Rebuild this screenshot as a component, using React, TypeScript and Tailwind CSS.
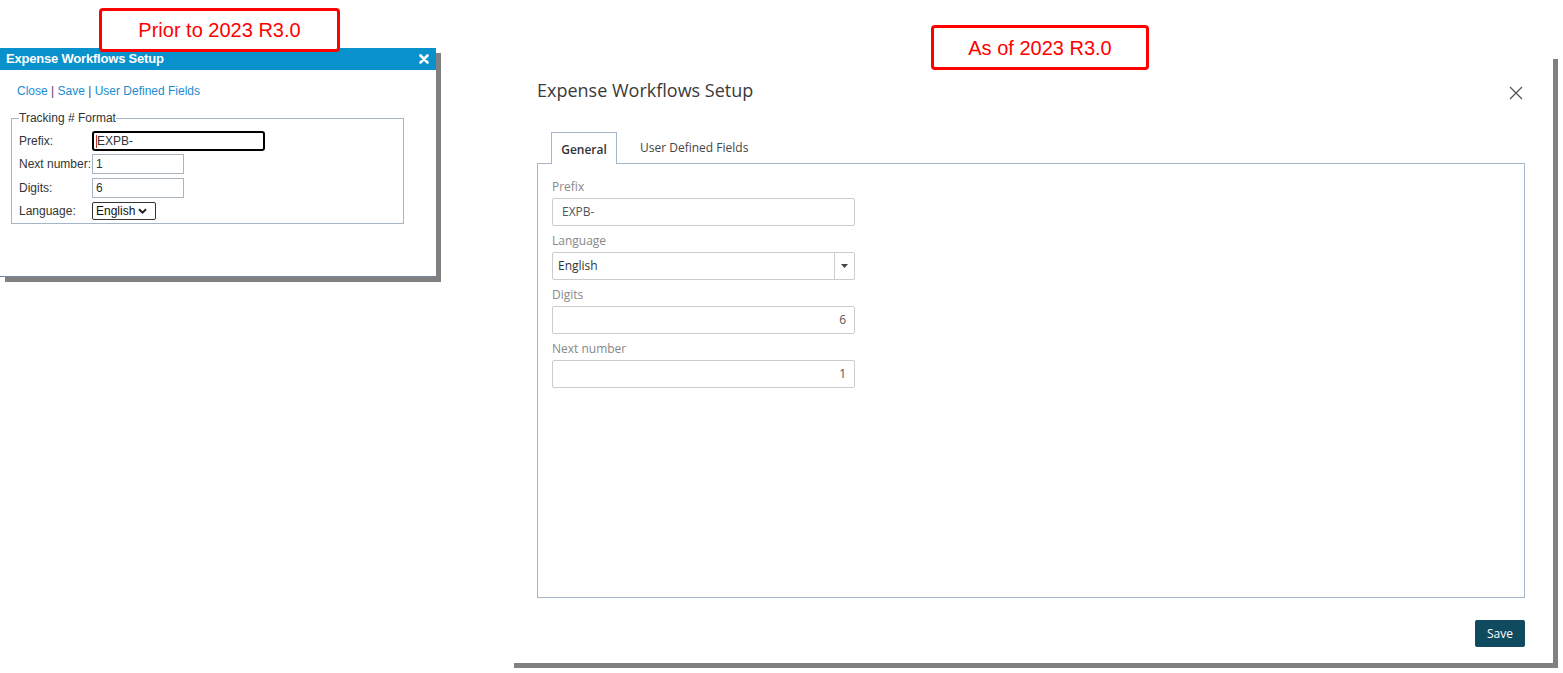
import React from "react";

function Caret() {
  return (
    <svg width="9" height="6" viewBox="0 0 9 6" className="ml-[3px]">
      <path d="M1 1.2 L4.5 4.6 L8 1.2" fill="none" stroke="#222" strokeWidth="2" />
    </svg>
  );
}

function OldDialog() {
  return (
    <div className="mt-[48px] w-[436px] h-[229px] bg-white border-b border-[#7387a8] shadow-[5px_5px_0_#808080] flex flex-col shrink-0 font-['Liberation_Sans',Arial,sans-serif] text-[12px] text-[#333]">
      <div className="h-[22px] bg-[#0991cc] flex items-center justify-between pl-[6px] pr-[7px]">
        <span className="text-white font-bold text-[13px] tracking-[-0.2px]">Expense Workflows Setup</span>
        <svg width="10" height="10" viewBox="0 0 10 10">
          <path d="M1.5 1.5 L8.5 8.5 M8.5 1.5 L1.5 8.5" stroke="#ffffff" strokeWidth="2.6" strokeLinecap="round" />
        </svg>
      </div>
      <div className="pl-[17px] pt-[14px] leading-[14px] text-[12px]">
        <span className="text-[#1a8ccf]">Close</span>
        <span className="text-[#5a3b7a]"> | </span>
        <span className="text-[#1a8ccf]">Save</span>
        <span className="text-[#5a3b7a]"> | </span>
        <span className="text-[#1a8ccf]">User Defined Fields</span>
      </div>
      <fieldset className="ml-[11px] mt-[13px] w-[393px] h-[113px] border border-[#a3b6c9] px-[7px] pt-[6px]">
        <legend className="ml-0 px-0 leading-[14px] text-[12px] text-[#333]">Tracking # Format</legend>
        <div className="flex flex-col">
          <div className="flex items-center h-[20px]">
            <span className="w-[73px]">Prefix:</span>
            <div className="w-[173px] h-[20px] border-2 border-black rounded-[3px] flex items-center pl-[2px] text-[#333]">
              <span className="w-px h-[13px] bg-[#c0392b]" />
              EXPB-
            </div>
          </div>
          <div className="flex items-center h-[20px] mt-[3px]">
            <span className="w-[73px] whitespace-nowrap">Next number:</span>
            <div className="w-[92px] h-[20px] border border-[#aab4be] flex items-center pl-[3px]">1</div>
          </div>
          <div className="flex items-center h-[20px] mt-[4px]">
            <span className="w-[73px]">Digits:</span>
            <div className="w-[92px] h-[20px] border border-[#aab4be] flex items-center pl-[3px]">6</div>
          </div>
          <div className="flex items-center h-[18px] mt-[4px]">
            <span className="w-[73px]">Language:</span>
            <div className="w-[64px] h-[18px] border border-[#333] rounded-[2px] flex items-center pl-[3px] text-[#111]">
              English
              <Caret />
            </div>
          </div>
        </div>
      </fieldset>
    </div>
  );
}

function Field({ label, children }: { label: string; children: React.ReactNode }) {
  return (
    <div className="flex flex-col mb-[7px]">
      <span className="text-[12px] leading-[16px] text-[#888]">{label}</span>
      <div className="mt-[3px]">{children}</div>
    </div>
  );
}

function NewDialog() {
  return (
    <div className="ml-[73px] mt-[54px] w-[1044px] h-[609px] bg-white shadow-[5px_5px_0_#808080] flex flex-col pt-[24px] px-[28px] shrink-0 font-['Open_Sans','Noto_Sans',sans-serif]">
      <div className="flex items-center justify-between h-[24px]">
        <span className="text-[18px] leading-[24px] text-[#3a3a3a] font-normal">Expense Workflows Setup</span>
        <svg width="14" height="14" viewBox="0 0 14 14" className="mr-[2px] mt-[6px]">
          <path d="M1 1 L13 13 M13 1 L1 13" stroke="#555" strokeWidth="1.3" />
        </svg>
      </div>
      <div className="flex items-end mt-[30px] pl-[14px] h-[31px]">
        <div className="h-[32px] w-[66px] border border-b-0 border-[#a4b6ca] bg-white flex items-center justify-center text-[12px] font-semibold text-[#333] mb-[-1px] relative z-10 pt-[2px]">
          General
        </div>
        <div className="h-[31px] pl-[23px] flex items-center text-[12px] text-[#444]">User Defined Fields</div>
      </div>
      <div className="h-[435px] border border-[#a4b6ca] pt-[15px] pl-[14px]">
        <div className="w-[303px] flex flex-col">
          <Field label="Prefix">
            <div className="h-[28px] border border-[#ccc] rounded-[2px] flex items-center pl-[9px] text-[12px] text-[#555]">EXPB-</div>
          </Field>
          <Field label="Language">
            <div className="h-[28px] border border-[#ccc] rounded-[2px] flex items-center text-[12px] text-[#333]">
              <span className="flex-1 pl-[5px]">English</span>
              <div className="w-[20px] h-full border-l border-[#ccc] flex items-center justify-center">
                <svg width="7" height="4" viewBox="0 0 7 4">
                  <path d="M0 0 L7 0 L3.5 4 Z" fill="#444" />
                </svg>
              </div>
            </div>
          </Field>
          <Field label="Digits">
            <div className="h-[28px] border border-[#ccc] rounded-[2px] flex items-center justify-end pr-[8px] text-[12px] text-[#555]">6</div>
          </Field>
          <Field label="Next number">
            <div className="h-[28px] border border-[#ccc] rounded-[2px] flex items-center justify-end pr-[8px] text-[12px] text-[#555]">1</div>
          </Field>
        </div>
      </div>
      <div className="flex justify-end mt-[22px]">
        <div className="w-[50px] h-[27px] bg-[#0f4a5f] rounded-[2px] flex items-center justify-center text-white text-[12px]">Save</div>
      </div>
    </div>
  );
}

export default function App() {
  return (
    <div className="relative w-[1563px] h-[673px] bg-white overflow-hidden">
      <div className="flex items-start">
        <OldDialog />
        <NewDialog />
      </div>
      <div className="absolute left-[99px] top-[8px] w-[241px] h-[44px] bg-white border-[3px] border-[#ff0000] rounded-[4px] flex items-center justify-center font-['Liberation_Sans',Arial,sans-serif] text-[20px] text-[#ff0000]">
        Prior to 2023 R3.0
      </div>
      <div className="absolute left-[931px] top-[25px] w-[218px] h-[45px] bg-white border-[3px] border-[#ff0000] rounded-[4px] flex items-center justify-center font-['Liberation_Sans',Arial,sans-serif] text-[20px] text-[#ff0000]">
        As of 2023 R3.0
      </div>
    </div>
  );
}
